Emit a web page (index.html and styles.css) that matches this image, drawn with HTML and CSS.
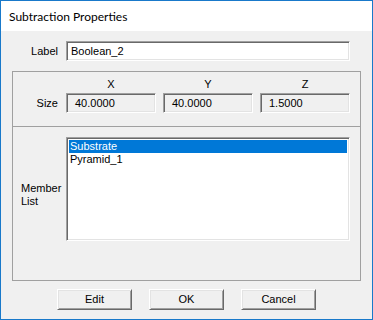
FILE: index.html
```html
<!DOCTYPE html>
<html>
<head>
<meta charset="utf-8">
<link rel="stylesheet" href="styles.css">
</head>
<body>
<div class="window">
  <div class="titlebar">Subtraction Properties</div>
  <div class="content">
    <div class="row label-row">
      <div class="lbl">Label</div>
      <div class="field edit">Boolean_2</div>
    </div>
    <div class="group group-size">
      <div class="axis-row">
        <div class="lbl"></div>
        <div class="axes">
          <div class="axis">X</div>
          <div class="axis">Y</div>
          <div class="axis">Z</div>
        </div>
      </div>
      <div class="row">
        <div class="lbl">Size</div>
        <div class="axes">
          <div class="field ro">40.0000</div>
          <div class="field ro">40.0000</div>
          <div class="field ro">1.5000</div>
        </div>
      </div>
    </div>
    <div class="group group-list">
      <div class="row list-row">
        <div class="lbl lbl-left">Member<br>List</div>
        <div class="listbox">
          <div class="item selected">Substrate</div>
          <div class="item">Pyramid_1</div>
        </div>
      </div>
    </div>
    <div class="buttons">
      <div class="btn">Edit</div>
      <div class="btn">OK</div>
      <div class="btn">Cancel</div>
    </div>
  </div>
</div>
</body>
</html>
```

FILE: styles.css
```css
html, body {
  margin: 0;
  padding: 0;
  background: #ffffff;
}
.window {
  width: 373px;
  height: 320px;
  box-sizing: border-box;
  border: 1px solid #1979ca;
  display: flex;
  flex-direction: column;
  font-family: "Liberation Sans", Arial, sans-serif;
  font-size: 11px;
  color: #000;
}
.titlebar {
  height: 30px;
  flex: none;
  background: #fff;
  padding-left: 8px;
  display: flex;
  align-items: center;
  font-family: Lato, "Noto Sans", sans-serif;
  font-size: 12px;
  color: #000;
}
.content {
  flex: 1;
  background: #f0f0f0;
  padding: 10px 11px 0 11px;
  display: flex;
  flex-direction: column;
}
.row {
  display: flex;
  align-items: center;
}
.lbl {
  width: 45px;
  flex: none;
  text-align: right;
  margin-right: 8px;
  line-height: 13px;
}
.label-row .lbl {
  width: 46px;
}
.field {
  height: 20px;
  box-sizing: border-box;
  border: 1px solid;
  border-color: #a0a0a0 #ffffff #ffffff #a0a0a0;
  box-shadow: inset 1px 1px 0 #696969, inset -1px -1px 0 #e3e3e3;
  display: flex;
  align-items: center;
  padding-left: 4px;
  line-height: 13px;
  white-space: nowrap;
}
.edit {
  width: 284px;
  background: #fff;
}
.ro {
  width: 90px;
  background: #f0f0f0;
  padding-left: 8px;
}
.group {
  border: 1px solid #a0a0a0;
  flex: none;
}
.group-size {
  margin-top: 10px;
  height: 56px;
  box-sizing: border-box;
  padding-top: 5px;
}
.axis-row {
  display: flex;
  height: 14px;
  margin-bottom: 2px;
}
.axes {
  display: flex;
  gap: 7px;
}
.axis {
  width: 90px;
  text-align: center;
  line-height: 14px;
}
.group-list {
  margin-top: -1px;
  height: 155px;
  box-sizing: border-box;
  padding-top: 10px;
}
.list-row {
  align-items: flex-start;
}
.lbl-left {
  text-align: left;
  padding-left: 8px;
  box-sizing: border-box;
  width: 45px;
  margin-top: 45px;
}
.listbox {
  width: 284px;
  height: 104px;
  box-sizing: border-box;
  background: #fff;
  border: 1px solid;
  border-color: #a0a0a0 #ffffff #ffffff #a0a0a0;
  box-shadow: inset 1px 1px 0 #696969, inset -1px -1px 0 #e3e3e3;
  padding: 2px;
}
.item {
  height: 13px;
  line-height: 13px;
  padding-left: 1px;
}
.item.selected {
  background: #0078d7;
  color: #fff;
}
.buttons {
  margin-top: 8px;
  display: flex;
  justify-content: center;
  gap: 17px;
}
.btn {
  width: 75px;
  height: 21px;
  box-sizing: border-box;
  background: #f0f0f0;
  border: 1px solid;
  border-color: #ffffff #696969 #696969 #ffffff;
  box-shadow: inset 1px 1px 0 #e3e3e3, inset -1px -1px 0 #a0a0a0;
  display: flex;
  align-items: center;
  justify-content: center;
  line-height: 13px;
}
```
